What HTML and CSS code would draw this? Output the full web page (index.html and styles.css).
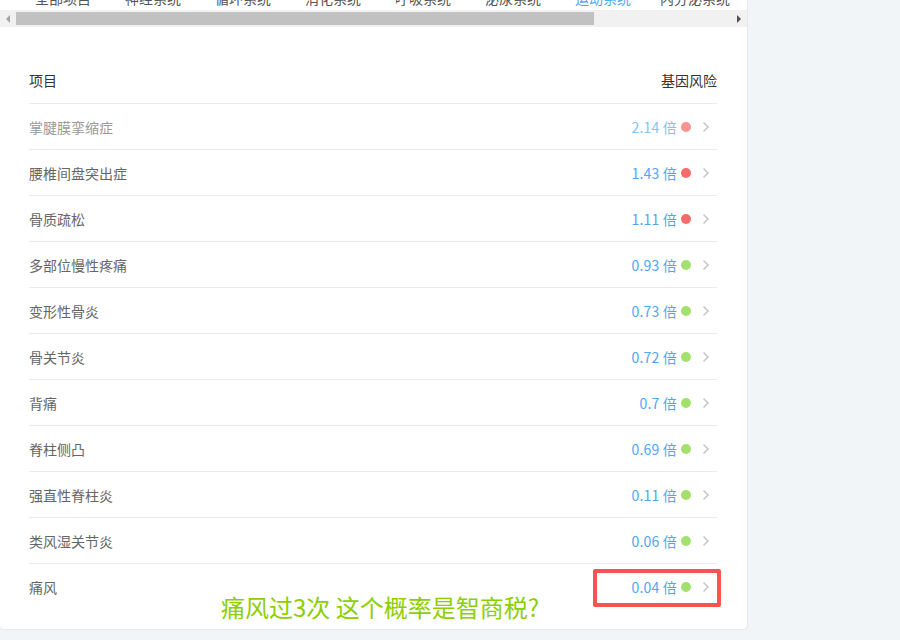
FILE: index.html
```html
<!DOCTYPE html>
<html lang="zh-CN">
<head>
<meta charset="utf-8">
<title>基因风险</title>
<link rel="stylesheet" href="styles.css">
</head>
<body>
<div class="panel">
  <div class="tabs-clip">
    <div class="tabs">
      <span class="tab">全部项目</span>
      <span class="tab">神经系统</span>
      <span class="tab">循环系统</span>
      <span class="tab">消化系统</span>
      <span class="tab">呼吸系统</span>
      <span class="tab">泌尿系统</span>
      <span class="tab tab-active">运动系统</span>
      <span class="tab tab-last">内分泌系统</span>
    </div>
  </div>
  <div class="hscroll">
    <div class="sb-btn"><span class="arrow-left"></span></div>
    <div class="sb-track"><div class="sb-thumb"></div></div>
    <div class="sb-btn"><span class="arrow-right"></span></div>
  </div>
  <div class="table">
    <div class="row head"><span>项目</span><span>基因风险</span></div>
    <div class="row faded"><span class="name">掌腱膜挛缩症</span><span class="risk"><span class="val">2.14 倍</span><i class="dot red"></i><svg class="chev" viewBox="0 0 8 12"><path d="M1.5 1.5 L6 6 L1.5 10.5"/></svg></span></div>
    <div class="row"><span class="name">腰椎间盘突出症</span><span class="risk"><span class="val">1.43 倍</span><i class="dot red"></i><svg class="chev" viewBox="0 0 8 12"><path d="M1.5 1.5 L6 6 L1.5 10.5"/></svg></span></div>
    <div class="row"><span class="name">骨质疏松</span><span class="risk"><span class="val">1.11 倍</span><i class="dot red"></i><svg class="chev" viewBox="0 0 8 12"><path d="M1.5 1.5 L6 6 L1.5 10.5"/></svg></span></div>
    <div class="row"><span class="name">多部位慢性疼痛</span><span class="risk"><span class="val">0.93 倍</span><i class="dot green"></i><svg class="chev" viewBox="0 0 8 12"><path d="M1.5 1.5 L6 6 L1.5 10.5"/></svg></span></div>
    <div class="row"><span class="name">变形性骨炎</span><span class="risk"><span class="val">0.73 倍</span><i class="dot green"></i><svg class="chev" viewBox="0 0 8 12"><path d="M1.5 1.5 L6 6 L1.5 10.5"/></svg></span></div>
    <div class="row"><span class="name">骨关节炎</span><span class="risk"><span class="val">0.72 倍</span><i class="dot green"></i><svg class="chev" viewBox="0 0 8 12"><path d="M1.5 1.5 L6 6 L1.5 10.5"/></svg></span></div>
    <div class="row"><span class="name">背痛</span><span class="risk"><span class="val">0.7 倍</span><i class="dot green"></i><svg class="chev" viewBox="0 0 8 12"><path d="M1.5 1.5 L6 6 L1.5 10.5"/></svg></span></div>
    <div class="row"><span class="name">脊柱侧凸</span><span class="risk"><span class="val">0.69 倍</span><i class="dot green"></i><svg class="chev" viewBox="0 0 8 12"><path d="M1.5 1.5 L6 6 L1.5 10.5"/></svg></span></div>
    <div class="row"><span class="name">强直性脊柱炎</span><span class="risk"><span class="val">0.11 倍</span><i class="dot green"></i><svg class="chev" viewBox="0 0 8 12"><path d="M1.5 1.5 L6 6 L1.5 10.5"/></svg></span></div>
    <div class="row"><span class="name">类风湿关节炎</span><span class="risk"><span class="val">0.06 倍</span><i class="dot green"></i><svg class="chev" viewBox="0 0 8 12"><path d="M1.5 1.5 L6 6 L1.5 10.5"/></svg></span></div>
    <div class="row last"><span class="name">痛风</span><span class="risk"><span class="val">0.04 倍</span><i class="dot green"></i><svg class="chev" viewBox="0 0 8 12"><path d="M1.5 1.5 L6 6 L1.5 10.5"/></svg></span>
      <div class="highlight"></div>
      <div class="note">痛风过3次 这个概率是智商税?</div>
    </div>
  </div>
</div>
</body>
</html>
```
FILE: styles.css
```css
html, body {
  margin: 0;
  padding: 0;
}
body {
  background: #f2f5f8;
  font-family: "Noto Sans CJK SC", "Noto Sans", sans-serif;
  font-size: 14px;
  color: #666;
  height: 640px;
  overflow: hidden;
}
.panel {
  width: 747px;
  background: #fff;
  border-radius: 0 0 4px 4px;
  box-shadow: 0 1px 2px rgba(0, 0, 0, 0.06), 1px 0 0 #e8ecf0;
}
.tabs-clip {
  height: 10px;
  overflow: hidden;
}
.tabs {
  display: flex;
  gap: 34px;
  padding-left: 35px;
  margin-top: -14px;
  line-height: 24px;
  white-space: nowrap;
  color: #555;
}
.tab-last {
  margin-left: -5px;
}
.tab-active {
  color: #4fa6f5;
}
.hscroll {
  display: flex;
  height: 17px;
  background: #f1f1f1;
}
.sb-btn {
  width: 16px;
  display: flex;
  align-items: center;
  justify-content: center;
}
.arrow-left {
  width: 0;
  height: 0;
  border-top: 4px solid transparent;
  border-bottom: 4px solid transparent;
  border-right: 4px solid #a3a3a3;
}
.arrow-right {
  width: 0;
  height: 0;
  border-top: 4px solid transparent;
  border-bottom: 4px solid transparent;
  border-left: 4px solid #505050;
}
.sb-track {
  flex: 1;
  display: flex;
  align-items: center;
}
.sb-thumb {
  width: 578px;
  height: 13px;
  background: #c1c1c1;
}
.table {
  padding: 30px 30px 19px 29px;
}
.row {
  position: relative;
  display: flex;
  align-items: center;
  justify-content: space-between;
  height: 46px;
  box-sizing: border-box;
  border-bottom: 1px solid #ebebeb;
}
.row.head {
  height: 47px;
}
.row.last {
  border-bottom: none;
}
.head {
  color: #333;
}
.faded .name {
  color: #9a9a9a;
}
.risk {
  display: flex;
  align-items: center;
}
.val {
  color: #4fa6f5;
  letter-spacing: 0.2px;
}
.faded .val {
  color: #86c1f5;
}
.dot {
  display: inline-block;
  width: 10px;
  height: 10px;
  border-radius: 50%;
  margin-left: 4px;
}
.dot.red {
  background: #f76b6b;
}
.faded .dot.red {
  background: #fb9191;
}
.dot.green {
  background: #a4e06e;
}
.chev {
  width: 8px;
  height: 12px;
  margin-left: 11px;
  margin-right: 7px;
  fill: none;
  stroke: #c8c8c8;
  stroke-width: 1.6;
}
.highlight {
  position: absolute;
  left: 564px;
  top: 5px;
  width: 120px;
  height: 30px;
  border: 4px solid #f65353;
  border-radius: 2px;
}
.note {
  position: absolute;
  left: 192px;
  top: 28px;
  font-size: 24px;
  line-height: 30px;
  color: #8ccf00;
  white-space: nowrap;
}
```
